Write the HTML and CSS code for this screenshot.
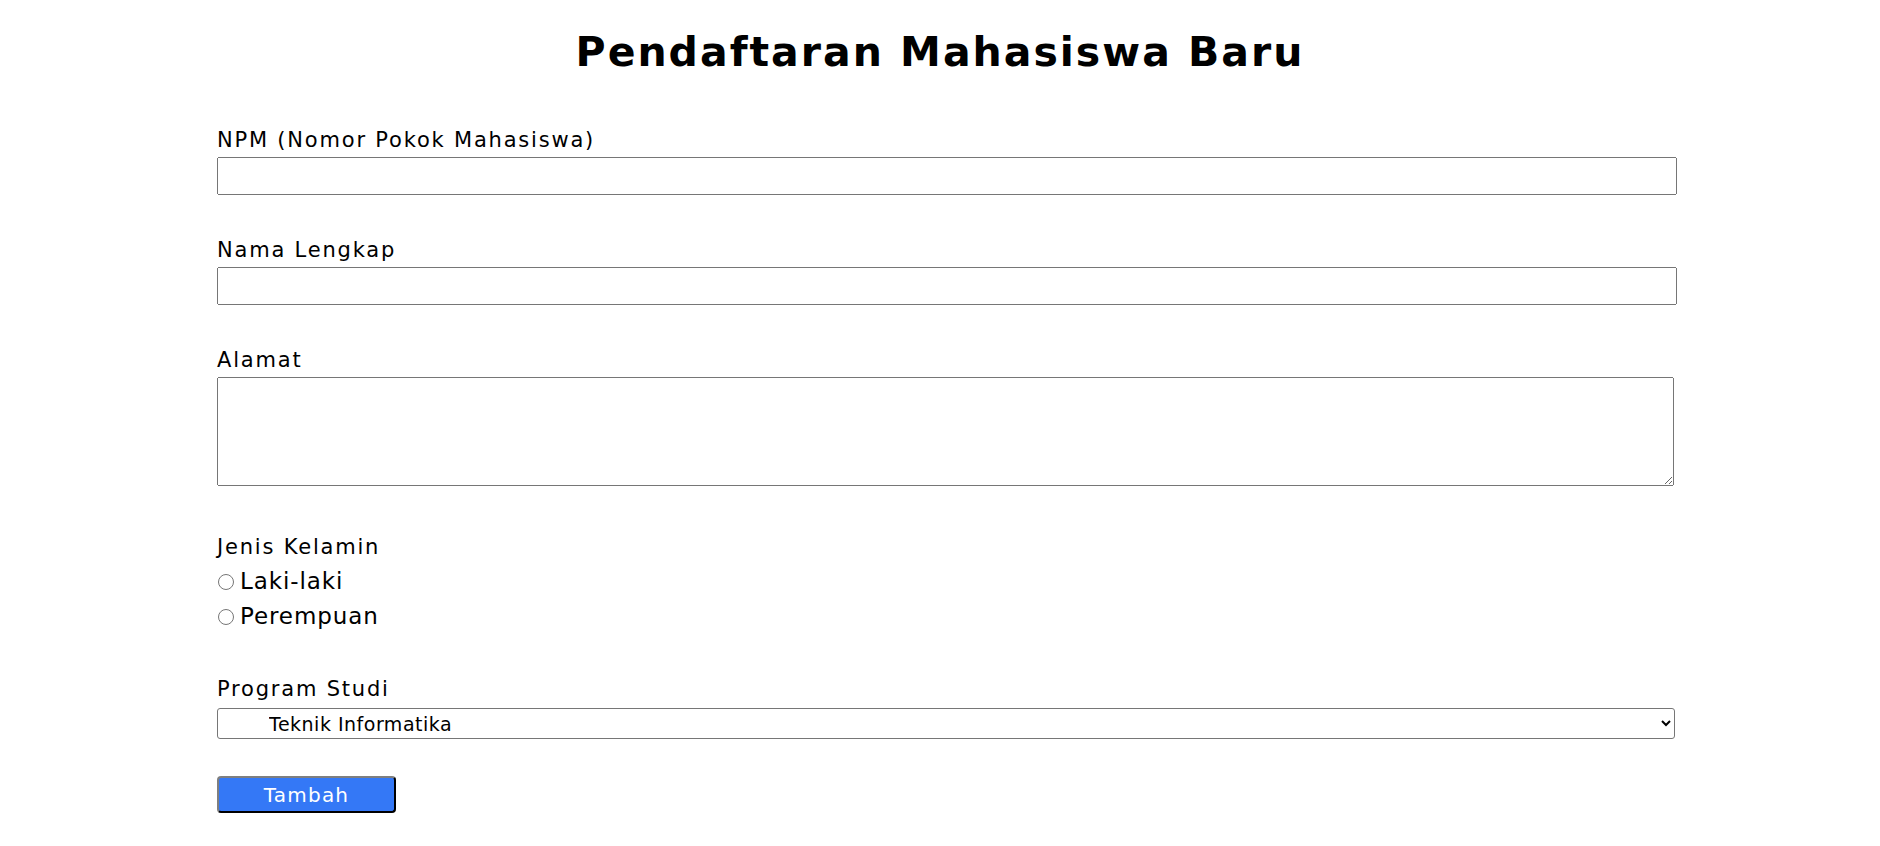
FILE: index.html
```html
<!DOCTYPE html>
<html lang="id">
<head>
<meta charset="utf-8">
<title>Pendaftaran Mahasiswa Baru</title>
<link rel="stylesheet" href="styles.css">
</head>
<body>
<h1 class="title">Pendaftaran Mahasiswa Baru</h1>
<form class="form">
  <div class="field">
    <label class="label" for="npm">NPM (Nomor Pokok Mahasiswa)</label>
    <input class="input" type="text" id="npm">
  </div>
  <div class="field">
    <label class="label" for="nama">Nama Lengkap</label>
    <input class="input" type="text" id="nama">
  </div>
  <div class="field">
    <label class="label" for="alamat">Alamat</label>
    <textarea class="textarea" id="alamat"></textarea>
  </div>
  <div class="field field-radio">
    <span class="label">Jenis Kelamin</span>
    <label class="radio-row"><input class="radio" type="radio" name="jk"> Laki-laki</label>
    <label class="radio-row"><input class="radio" type="radio" name="jk"> Perempuan</label>
  </div>
  <div class="field field-select">
    <label class="label label-select" for="prodi">Program Studi</label>
    <select class="select" id="prodi">
      <option>Teknik Informatika</option>
    </select>
  </div>
  <button class="btn" type="button">Tambah</button>
</form>
</body>
</html>
```
FILE: styles.css
```css
html, body {
  margin: 0;
  padding: 0;
  background: #ffffff;
}
body {
  font-family: "DejaVu Sans", "Open Sans", sans-serif;
  color: #000;
}
.title {
  margin: 0;
  padding-top: 22px;
  text-align: center;
  font-size: 41px;
  line-height: 60px;
  font-weight: 700;
  letter-spacing: 2px;
}
.form {
  margin: 43px 0 0 217px;
  width: 1460px;
  display: flex;
  flex-direction: column;
}
.field {
  display: flex;
  flex-direction: column;
  margin-bottom: 40px;
}
.label {
  display: block;
  font-size: 21px;
  line-height: 30px;
  letter-spacing: 1.8px;
  margin-bottom: 2px;
}
.label-select {
  margin-bottom: 4px;
}
.input {
  display: block;
  box-sizing: border-box;
  width: 1460px;
  height: 38px;
  margin: 0;
}
.textarea {
  display: block;
  box-sizing: border-box;
  width: 1457px;
  height: 109px;
  margin: 0;
}
.field-radio {
  margin-top: 6px;
  margin-bottom: 40px;
}
.radio-row {
  display: flex;
  align-items: center;
  font-size: 23px;
  letter-spacing: 0.9px;
  line-height: 35px;
  height: 35px;
}
.radio {
  width: 16px;
  height: 16px;
  margin: 0 6px 0 1px;
}
.field-select {
  margin-bottom: 37px;
}
.select {
  box-sizing: border-box;
  width: 1458px;
  height: 31px;
  padding-left: 47px;
  font-family: inherit;
  font-size: 19px;
  letter-spacing: 0.5px;
  color: #000;
  background: #fff;
  border: 1px solid #767676;
  border-radius: 3px;
}
.btn {
  box-sizing: border-box;
  width: 179px;
  height: 37px;
  background: #3478f6;
  color: #fff;
  font-family: inherit;
  font-size: 20px;
  letter-spacing: 1.2px;
  border: 2px outset #2b2b2b;
  border-radius: 4px;
  padding: 0;
}
```
